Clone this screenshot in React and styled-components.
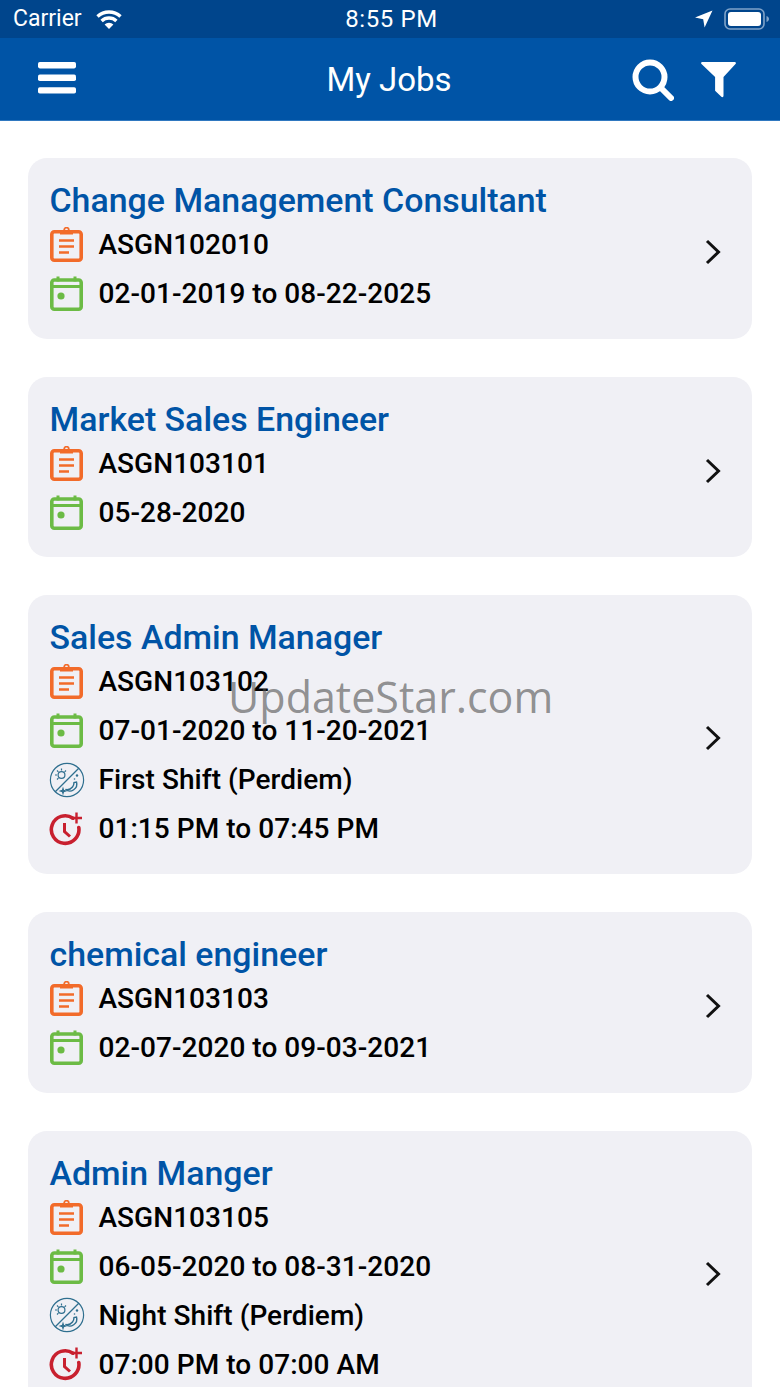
import React from "react";
import styled, { createGlobalStyle } from "styled-components";

const GlobalStyle = createGlobalStyle`
  html, body {
    margin: 0;
    padding: 0;
    background: #fff;
  }
  body {
    font-family: Roboto, "Liberation Sans", sans-serif;
  }
`;

const Page = styled.div`
  position: relative;
  width: 780px;
  height: 1387px;
  overflow: hidden;
  background: #fff;
`;

const StatusBar = styled.div`
  height: 38px;
  background: #00458c;
  color: #fff;
  display: grid;
  grid-template-columns: 1fr auto 1fr;
  align-items: center;
  padding: 0 10px 1px 13px;
  box-sizing: border-box;
  font-size: 23px;
`;

const StatusSide = styled.div`
  display: flex;
  align-items: center;
  gap: ${(p) => p.$gap || 12}px;
  justify-content: ${(p) => (p.$right ? "flex-end" : "flex-start")};
`;

const Clock = styled.div`
  font-size: 24px;
  letter-spacing: 0.6px;
`;

const NavBar = styled.div`
  height: 80px;
  padding: 2px 40px 0 38px;
  background: #0054a6;
  border-bottom: 1px solid #2f78c0;
  display: grid;
  grid-template-columns: 1fr auto 1fr;
  align-items: center;
  color: #fff;
`;

const NavTitle = styled.div`
  font-size: 33px;
  font-weight: 400;
  padding-bottom: 2px;
`;

const NavIcons = styled.div`
  display: flex;
  justify-content: flex-end;
  align-items: center;
  gap: 27px;
  padding-right: 4px;
`;

const List = styled.div`
  display: flex;
  flex-direction: column;
  gap: 38px;
  padding: 37.2px 28px 0;
`;

const Card = styled.div`
  background: #f0f0f5;
  border-radius: 19px;
  display: flex;
  align-items: center;
  justify-content: space-between;
  padding: 22px 31px 20.6px 21.5px;
`;

const CardBody = styled.div`
  display: flex;
  flex-direction: column;
`;

const Title = styled.div`
  color: #0054a6;
  font-size: 33.9px;
  font-weight: 500;
  line-height: 42px;
  height: 40px;
`;

const Row = styled.div`
  display: flex;
  align-items: center;
  height: 49px;
  font-size: 28px;
  font-weight: 500;
  letter-spacing: 0.05px;
  color: #000;
`;

const IconSlot = styled.span`
  display: flex;
  align-items: center;
  width: 49px;
  flex: none;
`;

const ChevronSlot = styled.span`
  display: flex;
  margin-top: 6px;
`;

const Watermark = styled.div`
  position: absolute;
  left: 228px;
  top: 669px;
  font-family: "Open Sans", sans-serif;
  font-size: 43px;
  line-height: 56px;
  color: rgba(80, 80, 80, 0.62);
  pointer-events: none;
`;

const Wifi = () => (
  <svg width="30" height="22" viewBox="0 0 30 22">
    <path d="M15 21l-4.4-4.6a6.4 6.4 0 0 1 8.8 0z" fill="#fff" />
    <path d="M7.6 13a10.8 10.8 0 0 1 14.8 0M3.5 8.6a16.8 16.8 0 0 1 23 0" stroke="#fff" strokeWidth="3.4" fill="none" />
  </svg>
);

const LocationArrow = () => (
  <svg width="18" height="18" viewBox="0 0 18 18">
    <path d="M17.5 0.5L9.6 17.5l-1.4-8.2L0 7.6z" fill="#fff" />
  </svg>
);

const Battery = () => (
  <svg width="46" height="22" viewBox="0 0 46 22">
    <rect x="1" y="1" width="39" height="20" rx="5" fill="none" stroke="#7fa3c9" strokeWidth="1.6" />
    <rect x="4" y="4" width="33" height="14" rx="3" fill="#fff" />
    <path d="M42.5 8c1.6.5 2.5 1.6 2.5 3s-.9 2.5-2.5 3z" fill="#7fa3c9" />
  </svg>
);

const Menu = () => (
  <svg width="38" height="32" viewBox="0 0 38 32">
    <rect x="0" y="0" width="38" height="6.4" rx="1.8" fill="#fff" />
    <rect x="0" y="12.6" width="38" height="6.4" rx="1.8" fill="#fff" />
    <rect x="0" y="25.2" width="38" height="6.4" rx="1.8" fill="#fff" />
  </svg>
);

const Search = () => (
  <svg width="42" height="42" viewBox="0 0 42 42">
    <circle cx="18" cy="18" r="14.5" fill="none" stroke="#fff" strokeWidth="6" />
    <path d="M29 29l10 10" stroke="#fff" strokeWidth="6" strokeLinecap="round" />
  </svg>
);

const Filter = () => (
  <svg width="35" height="36" viewBox="0 0 35 36">
    <path d="M1.5 0h32c1.3 0 1.8 1.2 1 2.1L22.5 15v18.5c0 1.8-1.3 2.2-2.4 1.1l-6-5.8V15L.5 2.1C-.3 1.2.2 0 1.5 0z" fill="#fff" />
  </svg>
);

const Chevron = () => (
  <svg width="16" height="26" viewBox="0 0 16 26">
    <path d="M2 2l11.5 11L2 24" fill="none" stroke="#111" strokeWidth="3" />
  </svg>
);

const ClipboardIcon = () => (
  <svg width="33" height="35" viewBox="0 0 33 35">
    <rect x="1.8" y="4.8" width="29.4" height="28.4" rx="2.5" fill="none" stroke="#f26b2a" strokeWidth="3.6" />
    <rect x="10" y="3" width="13" height="4.5" fill="#f26b2a" />
    <circle cx="16.5" cy="3" r="2.3" fill="none" stroke="#f26b2a" strokeWidth="1.8" />
    <path d="M9 13.5h15M9 19.5h15M9 25.5h10" stroke="#f26b2a" strokeWidth="2.4" />
  </svg>
);

const CalendarIcon = () => (
  <svg width="33" height="35" viewBox="0 0 33 35">
    <rect x="1.8" y="4" width="29.4" height="29.2" rx="2.5" fill="none" stroke="#6cbb45" strokeWidth="3.6" />
    <path d="M1.8 10.5h29.4" stroke="#6cbb45" strokeWidth="3" />
    <path d="M8 0.5v5M25 0.5v5" stroke="#6cbb45" strokeWidth="3" />
    <circle cx="11" cy="20" r="3.6" fill="#6cbb45" />
  </svg>
);

const ShiftIcon = () => (
  <svg width="36" height="36" viewBox="0 0 36 36" fill="none" stroke="#2f6f8f" strokeWidth="1.2" style={{ marginLeft: -1 }}>
    <circle cx="18" cy="18" r="16.6" />
    <path d="M6 30L30 6" />
    <circle cx="12.5" cy="13" r="3.4" />
    <path d="M12.5 6.5v2M6 13h2M8 8.5l1.4 1.4M17 8.5l-1.4 1.4M8 17.5l1.4-1.4" />
    <path d="M27.5 20a7 7 0 0 1-11 7.5c3 .5 5.5-.5 7-2.5 1-1.3 1.5-2.8 1.5-4.5z" strokeWidth="1.4" />
    <circle cx="28" cy="13.5" r="1.2" fill="#2f6f8f" stroke="none" />
    <circle cx="25.5" cy="17" r="0.8" fill="#2f6f8f" stroke="none" />
    <path d="M14 26.5l.6 1.900 1.900.6-1.900.6-.6 1.900-.6-1.900-1.900-.6 1.900-.6z" />
  </svg>
);

const OvertimeIcon = () => (
  <svg width="35" height="34" viewBox="0 0 35 34" fill="none" stroke="#c8202f" strokeWidth="3.6" style={{ marginLeft: -1 }}>
    <path d="M24 6.2A13.8 13.8 0 1 0 29.8 15.5" strokeLinecap="round" />
    <path d="M15.5 11v8.5l5.5 5" strokeWidth="3" />
    <path d="M27.5 0.5v11M22 6h11" strokeWidth="2.4" />
  </svg>
);

const jobs = [
  { title: "Change Management Consultant", id: "ASGN102010", dates: "02-01-2019 to 08-22-2025" },
  { title: "Market Sales Engineer", id: "ASGN103101", dates: "05-28-2020" },
  {
    title: "Sales Admin Manager",
    id: "ASGN103102",
    dates: "07-01-2020 to 11-20-2021",
    shift: "First Shift (Perdiem)",
    hours: "01:15 PM to 07:45 PM",
  },
  { title: "chemical engineer", id: "ASGN103103", dates: "02-07-2020 to 09-03-2021" },
  {
    title: "Admin Manger",
    id: "ASGN103105",
    dates: "06-05-2020 to 08-31-2020",
    shift: "Night Shift (Perdiem)",
    hours: "07:00 PM to 07:00 AM",
  },
];

export default function App() {
  return (
    <Page>
      <GlobalStyle />
      <StatusBar>
        <StatusSide>
          Carrier
          <Wifi />
        </StatusSide>
        <Clock>8:55 PM</Clock>
        <StatusSide $right $gap={11}>
          <LocationArrow />
          <Battery />
        </StatusSide>
      </StatusBar>
      <NavBar>
        <div>
          <Menu />
        </div>
        <NavTitle>My Jobs</NavTitle>
        <NavIcons>
          <Search />
          <Filter />
        </NavIcons>
      </NavBar>
      <List>
        {jobs.map((job) => (
          <Card key={job.id}>
            <CardBody>
              <Title>{job.title}</Title>
              <Row>
                <IconSlot><ClipboardIcon /></IconSlot>
                {job.id}
              </Row>
              <Row>
                <IconSlot><CalendarIcon /></IconSlot>
                {job.dates}
              </Row>
              {job.shift && (
                <Row>
                  <IconSlot><ShiftIcon /></IconSlot>
                  {job.shift}
                </Row>
              )}
              {job.hours && (
                <Row>
                  <IconSlot><OvertimeIcon /></IconSlot>
                  {job.hours}
                </Row>
              )}
            </CardBody>
            <ChevronSlot><Chevron /></ChevronSlot>
          </Card>
        ))}
      </List>
      <Watermark>UpdateStar.com</Watermark>
    </Page>
  );
}
